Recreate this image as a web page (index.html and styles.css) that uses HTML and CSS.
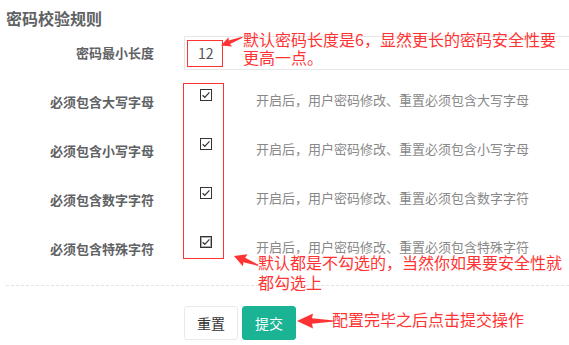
FILE: index.html
```html
<!DOCTYPE html>
<html lang="zh-CN">
<head>
<meta charset="utf-8">
<title>密码校验规则</title>
<link rel="stylesheet" href="styles.css">
</head>
<body>
<div class="panel">
  <h3 class="title">密码校验规则</h3>
  <div class="form">
    <div class="row row-input">
      <label class="lbl">密码最小长度</label>
      <div class="ctrl"><div class="input">12</div></div>
    </div>
    <div class="row row-check">
      <label class="lbl">必须包含大写字母</label>
      <div class="chk-col"><span class="chk"><svg viewBox="0 0 12 12" width="12" height="12"><rect x="0.5" y="0.5" width="11" height="11" fill="#fff" stroke="#333"/><path d="M2.6 6.2 L4.8 8.3 L9.4 3.4" fill="none" stroke="#333" stroke-width="1.2"/></svg></span></div>
      <div class="desc">开启后，用户密码修改、重置必须包含大写字母</div>
    </div>
    <div class="row row-check">
      <label class="lbl">必须包含小写字母</label>
      <div class="chk-col"><span class="chk"><svg viewBox="0 0 12 12" width="12" height="12"><rect x="0.5" y="0.5" width="11" height="11" fill="#fff" stroke="#333"/><path d="M2.6 6.2 L4.8 8.3 L9.4 3.4" fill="none" stroke="#333" stroke-width="1.2"/></svg></span></div>
      <div class="desc">开启后，用户密码修改、重置必须包含小写字母</div>
    </div>
    <div class="row row-check">
      <label class="lbl">必须包含数字字符</label>
      <div class="chk-col"><span class="chk"><svg viewBox="0 0 12 12" width="12" height="12"><rect x="0.5" y="0.5" width="11" height="11" fill="#fff" stroke="#333"/><path d="M2.6 6.2 L4.8 8.3 L9.4 3.4" fill="none" stroke="#333" stroke-width="1.2"/></svg></span></div>
      <div class="desc">开启后，用户密码修改、重置必须包含数字字符</div>
    </div>
    <div class="row row-check">
      <label class="lbl">必须包含特殊字符</label>
      <div class="chk-col"><span class="chk"><svg viewBox="0 0 12 12" width="12" height="12"><rect x="0.5" y="0.5" width="11" height="11" fill="#fff" stroke="#333"/><rect x="1.5" y="1.5" width="9" height="9" fill="none" stroke="#555" stroke-width="1" stroke-dasharray="1 1"/><path d="M2.6 6.2 L4.8 8.3 L9.4 3.4" fill="none" stroke="#333" stroke-width="1.2"/></svg></span></div>
      <div class="desc">开启后，用户密码修改、重置必须包含特殊字符</div>
    </div>
    <div class="divider"></div>
    <div class="actions">
      <button class="btn btn-reset" type="button">重置</button>
      <button class="btn btn-submit" type="button">提交</button>
    </div>
  </div>

  <div class="mark mark-input"></div>
  <div class="mark mark-checks"></div>
  <div class="note note-1">默认密码长度是6，显然更长的密码安全性要<br>更高一点。</div>
  <div class="note note-2">默认都是不勾选的，当然你如果要安全性就<br>都勾选上</div>
  <div class="note note-3">配置完毕之后点击提交操作</div>
  <svg class="arrows" width="569" height="345" viewBox="0 0 569 345">
    <g fill="#f33">
      <g transform="translate(221 45.5) rotate(-21)">
        <polygon points="0,0 10,-5 9,-1.8 23,-0.6 23,0.6 9,1.8 10,5"/>
      </g>
      <g transform="translate(234 256) rotate(21)">
        <polygon points="0,0 12,-6.5 11,-2.4 26,-0.6 26,0.6 11,2.4 12,6.5"/>
      </g>
      <g transform="translate(297 321)">
        <polygon points="0,0 16,-7.5 15,-2.8 37,-0.6 37,0.6 15,2.8 16,7.5"/>
      </g>
    </g>
  </svg>
</div>
</body>
</html>
```

FILE: styles.css
```css
html, body {
  margin: 0;
  padding: 0;
  background: #fff;
  overflow: hidden;
}

body {
  font-family: "Noto Sans CJK SC", "Noto Sans", sans-serif;
  color: #676a6c;
}

.panel {
  position: relative;
  display: flow-root;
  width: 569px;
  height: 345px;
}

.title {
  margin: 8px 0 0 6px;
  font-size: 16px;
  line-height: 20px;
  font-weight: bold;
  color: #5f6264;
}

.form {
  display: flex;
  flex-direction: column;
}

.row {
  display: flex;
}

.lbl {
  width: 154px;
  flex: none;
  text-align: right;
  font-size: 13px;
  line-height: 20px;
  font-weight: bold;
  color: #5f6264;
}

.row-input {
  margin-top: 8px;
  height: 34px;
  align-items: center;
}

.ctrl {
  margin-left: 30px;
  flex: none;
}

.input {
  box-sizing: border-box;
  width: 400px;
  height: 34px;
  border: 1px solid #e5e6e7;
  padding-left: 13px;
  font-size: 14px;
  line-height: 32px;
  color: #555;
}

.row-check {
  height: 49px;
  align-items: flex-start;
}

.row-input + .row-check {
  margin-top: 8px;
}

.row-check .lbl {
  padding-top: 14px;
}

.chk-col {
  flex: none;
  width: 72px;
  margin-left: 30px;
  padding-top: 11px;
  box-sizing: border-box;
  padding-left: 16px;
}

.chk {
  display: block;
  width: 12px;
  height: 12px;
}

.chk svg {
  display: block;
}

.desc {
  padding-top: 12px;
  font-size: 13px;
  line-height: 20px;
  color: #888;
}

.divider {
  margin: 11px 0 0 6px;
  border-top: 1px dashed #e3e3e3;
}

.actions {
  display: flex;
  gap: 4px;
  margin: 20px 0 0 184px;
}

.btn {
  box-sizing: border-box;
  width: 54px;
  height: 34px;
  font-family: "Noto Sans CJK SC", sans-serif;
  font-size: 14px;
  border-radius: 3px;
  padding: 0;
}

.btn-reset {
  background: #fff;
  border: 1px solid #e7eaec;
  color: #333;
}

.btn-submit {
  background: #1ab394;
  border: 1px solid #1ab394;
  color: #fff;
}

.mark {
  position: absolute;
  border: 1.5px solid #f33;
  box-sizing: border-box;
}

.mark-input {
  left: 187px;
  top: 40px;
  width: 36px;
  height: 27px;
}

.mark-checks {
  left: 183px;
  top: 83px;
  width: 41px;
  height: 176px;
}

.note {
  position: absolute;
  color: #f33;
  font-size: 16px;
  white-space: nowrap;
}

.note-1 {
  left: 243px;
  top: 30px;
  line-height: 18px;
}

.note-2 {
  left: 258px;
  top: 252px;
  line-height: 20px;
}

.note-3 {
  left: 332px;
  top: 309px;
  line-height: 20px;
}

.arrows {
  position: absolute;
  left: 0;
  top: 0;
  pointer-events: none;
}
```
